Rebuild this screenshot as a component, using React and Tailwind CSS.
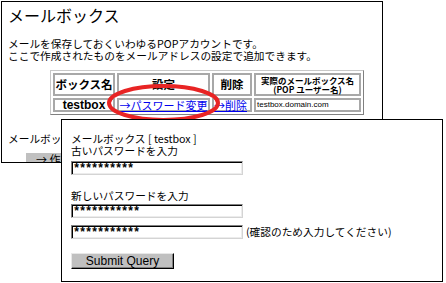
const jp = { fontFamily: '"Noto Sans CJK JP", "Liberation Sans", sans-serif' };

const PasswordBox = ({ stars }) => (
    <div className="w-[172px] h-[14px] flex items-center pl-[1px] bg-white border border-t-[#808080] border-l-[#808080] border-b-[#d4d4d4] border-r-[#d4d4d4] shadow-[inset_1px_1px_0_#000,inset_-1px_-1px_0_#ececec]">
        <span className="translate-y-[1px] text-[12px] leading-[10px] font-bold tracking-[-1.2px] text-black" style={{ fontFamily: '"Liberation Mono", monospace' }}>{stars}</span>
    </div>
);

const BackWindow = () => (
    <div className="absolute left-[1px] top-[1px] w-[382px] h-[162px] bg-white border border-black pl-[6px] pt-[3px] overflow-hidden" style={jp}>
        <h1 className="text-[16px] leading-[20px] text-black">メールボックス</h1>
        <p className="mt-[13px] text-[10.7px] leading-[12px] text-black">
            メールを保存しておくいわゆるPOPアカウントです。<br />
            ここで作成されたものをメールアドレスの設定で追加できます。
        </p>
        <table className="mt-[8px] ml-[42px] border-separate border-spacing-[2px] border border-t-[#c8c8c8] border-l-[#c8c8c8] border-b-[#808080] border-r-[#808080]">
            <tbody>
                <tr>
                    <th className="w-[62px] h-[23px] p-0 border-2 border-[#a8a8a8] text-[11.5px] font-bold text-black">ボックス名</th>
                    <th className="w-[93px] h-[23px] p-0 border-2 border-[#a8a8a8] text-[11.5px] font-bold text-black">設定</th>
                    <th className="w-[40px] h-[23px] p-0 border-2 border-[#a8a8a8] text-[11.5px] font-bold text-black">削除</th>
                    <th className="w-[107px] h-[23px] p-0 border-2 border-[#a8a8a8] text-[8.5px] leading-[9px] font-bold text-black">
                        実際のメールボックス名<br />(POP ユーザー名)
                    </th>
                </tr>
                <tr>
                    <td className="h-[14px] p-0 border-2 border-[#a8a8a8] text-center text-[12px] leading-[10px] font-bold text-black" style={{ fontFamily: '"Liberation Sans", sans-serif' }}>testbox</td>
                    <td className="h-[14px] p-0 border-2 border-[#a8a8a8] text-center text-[11px] leading-[10px]">
                        <a href="#" className="text-[#0000ee] underline">→パスワード変更</a>
                    </td>
                    <td className="h-[14px] p-0 border-2 border-[#a8a8a8] text-[11px] leading-[10px]">
                        <a href="#" className="text-[#0000ee] underline">→削除</a>
                    </td>
                    <td className="h-[14px] p-0 pl-[1px] border-2 border-[#a8a8a8] text-[8px] leading-[10px] text-black" style={{ fontFamily: '"Liberation Sans", sans-serif' }}>testbox.domain.com</td>
                </tr>
            </tbody>
        </table>
        <p className="mt-[18px] text-[10.7px] leading-[12px] text-black">メールボックスを新しく作成します。</p>
        <button className="mt-[7px] ml-[18px] h-[12px] pl-[10px] pr-[8px] bg-[#c0c0c0] text-[11px] leading-[12px] text-black text-left">→ 作成する</button>
    </div>
);

const FrontWindow = () => (
    <div className="absolute left-[61px] top-[119px] w-[382px] h-[163px] bg-white border border-black pl-[9px] pt-[13px]" style={jp}>
        <p className="text-[10.7px] leading-[12px] text-black">
            メールボックス [ testbox ]<br />古いパスワードを入力
        </p>
        <div className="mt-[4px]">
            <PasswordBox stars="**********" />
        </div>
        <p className="mt-[15px] text-[10.7px] leading-[12px] text-black">新しいパスワードを入力</p>
        <div className="mt-[2px]">
            <PasswordBox stars="***********" />
        </div>
        <div className="mt-[7px] flex items-center gap-[3px]">
            <PasswordBox stars="***********" />
            <span className="text-[10.7px] leading-[12px] text-black">(確認のため入力してください)</span>
        </div>
        <button className="mt-[14px] w-[103px] h-[16px] flex items-center justify-center bg-[#c0c0c0] border border-t-[#e8e8e8] border-l-[#e8e8e8] border-b-black border-r-black shadow-[inset_-1px_-1px_0_#808080] text-[12px] leading-none text-black" style={{ fontFamily: '"Liberation Sans", sans-serif' }}>
            Submit Query
        </button>
    </div>
);

export default function App() {
    return (
        <div className="relative w-[446px] h-[283px] bg-white overflow-hidden">
            <BackWindow />
            {/* red marker around the password link */}
            <svg className="absolute left-[100px] top-[78px]" width="130" height="52" viewBox="0 0 130 52">
                <ellipse cx="63.5" cy="25" rx="54.5" ry="17" fill="none" stroke="#e82424" strokeWidth="4" />
            </svg>
            <FrontWindow />
        </div>
    );
}
